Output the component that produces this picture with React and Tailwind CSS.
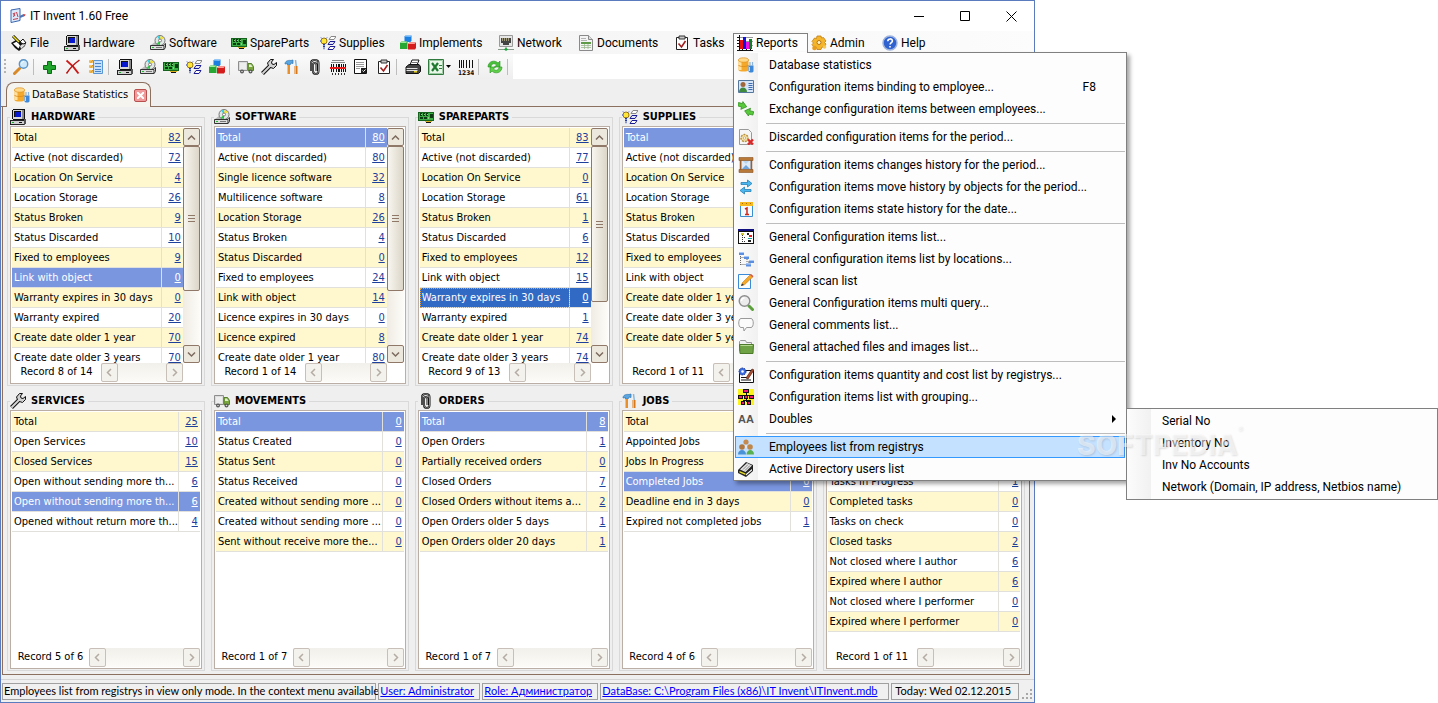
import { Fragment } from "react";
import clsx from "clsx";

// ---------- Icons (all on a 16x16 grid) ----------
const drawings = {
  app: (
    <>
      <path d="M1 2l9-1.500v12L1 14.500z" fill="#dbe9fa" stroke="#3a66b0" />
      <path d="M3 5l2 3M5 4.500L3.500 9M6.500 4l1.500 5M3 11.500l5-1" stroke="#c83c4c" />
      <path d="M10 9l4-2" stroke="#4a76b8" strokeWidth="2" />
      <path d="M13 6.500l2.500-.5-.5 2-2 .5z" fill="#d04848" />
    </>
  ),
  file: (
    <>
      <path d="M0 8l5-3 10 2-1 4-6 5-4-3z" fill="#111" />
      <path d="M2 8.500l4-2 3 4-1.500 3z" fill="#fff" />
      <path d="M9 11l4-3 1 2-4 4z" fill="#ddd" />
      <path d="M2 1l6 6" stroke="#111" strokeWidth="3" />
      <path d="M2 1l6 6" stroke="#f2e21a" strokeWidth="1.500" />
      <path d="M9 7l3-3 3 4-3 1z" fill="#fff" stroke="#111" />
    </>
  ),
  pc: (
    <g shapeRendering="crispEdges">
      <path d="M3 0h11l1 1v9l-1 1H3l-1-1V1z" fill="#111" />
      <path d="M3 1h9v9H3z" fill="#d8d8d8" />
      <path d="M12 1h2v9h-2z" fill="#8a8a8a" />
      <path d="M4 2h7v6H4z" fill="#111" />
      <path d="M5 3h6v5H5z" fill="#0818d0" />
      <path d="M0 11h14v4H0z" fill="#d0d0d0" stroke="#222" />
      <path d="M14 10h2v4l-2 2z" fill="#555" />
      <path d="M9 13h3v1H9z" fill="#111" />
      <path d="M2 13h2v1H2z" fill="#18b028" />
    </g>
  ),
  cd: (
    <>
      <path d="M1 10l4-3h10l-1 3v4H1z" fill="#b9b9b9" />
      <circle cx="10" cy="5.500" r="5" fill="#dfe8e4" stroke="#777" />
      <path d="M10 5.500L7 1.500 10 .8z" fill="#30d0f0" />
      <path d="M10 5.500l.5-4.500 3.500 2z" fill="#f4e02c" />
      <path d="M10 5.500l-3.500 3.500L10 10z" fill="#28c840" />
      <circle cx="10" cy="5.500" r="1.500" fill="#fff" stroke="#666" strokeWidth=".8" />
      <path d="M.5 10.500h13.500v4H.5z" fill="#dcdcdc" stroke="#333" />
      <path d="M2 12.500h2" stroke="#20c030" />
      <path d="M6 12.500h6" stroke="#777" />
      <path d="M14.500 10l1-1.500v4l-1.500 2" stroke="#333" fill="none" />
    </>
  ),
  board: (
    <g shapeRendering="crispEdges">
      <path d="M0 3h16v9H0z" fill="#15631c" />
      <path d="M1 4h14v7H1z" fill="#3cae46" />
      <path d="M2 4h2v3H2zM5 4h2v3H5zM8 4h2v3H8zM12 5h3v4h-3zM2 8h3v2H2zM6 8h3v2H6z" fill="#0c3a12" />
      <path d="M3 5h1v1H3zM6 5h1v1H6zM9 5h1v1H9zM10 8h1v2h-1z" fill="#8fd080" />
      <path d="M7 12h7v1H7z" fill="#d8b020" />
      <path d="M8 13h5v1H8z" fill="#111" />
    </g>
  ),
  supplies: (
    <>
      <circle cx="4" cy="6" r="3" fill="#ffe63a" stroke="#a07808" />
      <path d="M1 2.500l1 1M7 2.500l-1 1M0 6h1" stroke="#2848d8" />
      <path d="M3 9.500h2M3 11.500h2M3.500 13.500h1" stroke="#2038b0" strokeWidth="1.500" />
      <path d="M9 4.500L11 1.500h5l-2 3z" fill="#fff" stroke="#888" />
      <path d="M8 9.500l2-3h5l-2 3z" fill="#dfe4ff" stroke="#1c1c90" />
      <path d="M8 14.500l2-3h5l-2 3z" fill="#fff" stroke="#1c1c90" />
    </>
  ),
  blocks: (
    <>
      <path d="M4.500 1.500l1-1h6v5l-1 1.500h-6z" fill="#1a7fe0" />
      <path d="M4.500 1.500l1-1h6l-1 1.200z" fill="#9fd2ff" />
      <path d="M0 8l1.500-1.500H7.500V14H0z" fill="#27a834" />
      <path d="M0 8l1.500-1.500h6L6 8z" fill="#a0ec9c" />
      <path d="M8 9l1.500-1.500H16V13l-1 1.500H8z" fill="#d41c1c" />
      <path d="M8 9l1.500-1.500H16L14.500 9z" fill="#ff9c94" />
    </>
  ),
  network: (
    <>
      <path d="M1.500.5h13v11h-13z" fill="#e6e6e6" stroke="#9a9a9a" />
      <path d="M3 3h10v5h-2v2H5V8H3z" fill="#444" />
      <path d="M4.500 3v3M6.500 3v3M8.500 3v3M10.500 3v3" stroke="#b8b090" strokeWidth=".8" />
      <path d="M0 14.500h16M8 12v3" stroke="#8a9a8c" />
      <path d="M6 14.500l2-2 2 2-2 1.500z" fill="#18a838" />
    </>
  ),
  docs: (
    <>
      <path d="M1.500.5h9l4 4v11h-13z" fill="#f4f4f4" stroke="#8a8a8a" />
      <path d="M10.500.5v4h4" fill="#ddd" stroke="#8a8a8a" />
      <path d="M3 5.500h6M3 3.500h5" stroke="#b4b4b4" />
      <path d="M3 7h10v2H3z" fill="#5f9a48" />
      <path d="M3 10.500h10M3 12.500h10M6.500 9v5M10 9v5" stroke="#9cb890" strokeWidth=".8" />
    </>
  ),
  tasks: (
    <>
      <path d="M2.500 2.500h11v12h-11z" fill="#fff" stroke="#222" />
      <path d="M5 1h6v3H5z" fill="#c8c8c8" stroke="#333" />
      <path d="M4.500 8.500l3 3.500 4-6" fill="none" stroke="#a02020" strokeWidth="1.600" />
    </>
  ),
  chart: (
    <g shapeRendering="crispEdges">
      <path d="M2 2h14M2 6h14M2 10h14" stroke="#999" />
      <path d="M2 0v15M0 15h16M0 2h2M0 5h2M0 8h2M0 11h2M5 14v2M9 14v2M13 14v2" stroke="#111" />
      <path d="M3 5h3v9H3z" fill="#e81010" />
      <path d="M6 2h3v12H6z" fill="#1010e0" />
      <path d="M9 7h3v7H9z" fill="#f010e0" />
      <path d="M12 4h3v10h-3z" fill="#108028" />
    </g>
  ),
  gear: (
    <>
      <path
        d="M6 1h4l.5 2 2-.5L15 6l-1.500 1.500L15 9l-2 3.500-2-.5-1 2.500H6L5.500 12.500l-2 .5L1 9.500 2.500 8 1 6.500 3.500 3l2 .5z"
        fill="#f4b52a"
        stroke="#c07c10"
        strokeWidth=".8"
      />
      <circle cx="8" cy="7.500" r="2" fill="#fff3c8" stroke="#b87410" />
      <circle cx="3.500" cy="13" r="2.300" fill="#e89c1c" />
      <circle cx="13.500" cy="12" r="1.800" fill="#f6c850" />
    </>
  ),
  help: (
    <>
      <circle cx="8" cy="8" r="7" fill="#2f62d0" stroke="#9fb4dc" strokeWidth="1.500" />
      <path d="M5.800 6.200c0-3 4.600-3 4.600-.2 0 1.700-2.300 1.800-2.300 3.600M8 11v1.600" fill="none" stroke="#fff" strokeWidth="1.600" />
    </>
  ),
  search: (
    <>
      <path d="M1.500 14.500l5-5" stroke="#d88a28" strokeWidth="3" strokeLinecap="round" />
      <circle cx="10.500" cy="5" r="4.200" fill="#cfe9fb" stroke="#5b94c8" strokeWidth="1.400" />
      <path d="M8.500 4.500c.3-1.500 1.500-2 2.500-2" stroke="#fff" fill="none" />
    </>
  ),
  plus: (
    <path d="M5.500 2.500h4v4h4v4h-4v4h-4v-4h-4v-4h4z" fill="#22a52c" stroke="#0b6b14" />
  ),
  cross: (
    <>
      <path d="M1.500 1.500C6 5 10 9 13.500 14.500" stroke="#d01818" strokeWidth="1.800" fill="none" />
      <path d="M14.500 1C9 5 5 9 1.500 14.500" stroke="#b81414" strokeWidth="1.500" fill="none" />
    </>
  ),
  checklist: (
    <>
      <path d="M5.500 1.500h9v13h-9z" fill="#c4e0fa" stroke="#5a96d4" />
      <path d="M7 4.500h6M7 7.500h6M7 10.500h6M7 12.500h6" stroke="#4a86c8" />
      <path d="M1 1h4v3H1zM1 6h4v3H1zM1 11h4v3H1z" fill="#f8c860" />
      <path d="M2 2.500l1 1 2-2.500M2 7.500l1 1 2-2.500M2 12.500l1 1 2-2.500" stroke="#d88c20" fill="none" />
    </>
  ),
  truck: (
    <>
      <path d="M.5 2.500h9v9h-9z" fill="#dcdcdc" stroke="#8e8e8e" />
      <path d="M2 5h6M2 7h6M2 9h6" stroke="#fff" />
      <path d="M10 4.500h3.500l2 3v4H10z" fill="#7aa83e" stroke="#56802a" />
      <path d="M11 5.500h2l1.500 2.500H11z" fill="#dfeecb" />
      <circle cx="4" cy="12.500" r="2" fill="#555" />
      <circle cx="12.500" cy="12.500" r="2" fill="#555" />
      <circle cx="4" cy="12.500" r=".8" fill="#ddd" />
      <circle cx="12.500" cy="12.500" r=".8" fill="#ddd" />
    </>
  ),
  wrench: (
    <>
      <path d="M1.500 14.500l7-7" stroke="#111" strokeWidth="4" />
      <path d="M8 8l-1.500-4L9.500.5h3L10.500 3l.5 2 2 .5L15.500 3.500v3l-3 3z" fill="#d0d0d0" stroke="#111" strokeLinejoin="round" />
      <path d="M1.500 14.500L9.500 6.500" stroke="#d4d4d4" strokeWidth="2" />
    </>
  ),
  hammer: (
    <>
      <path d="M1 5c0-3 3-4 6-3.500L9 1v3.500L7 4 6 6H3.500V4.500z" fill="#5aa6e0" stroke="#2d74b4" strokeWidth=".7" />
      <path d="M3.500 6H6v9H3.500z" fill="#e8912c" />
      <path d="M11.500 1l.8 6" stroke="#8ab8dc" strokeWidth="1.500" />
      <path d="M10.500 7h3v8h-3z" fill="#d87818" />
      <path d="M11.500 7v8" stroke="#ffc878" strokeWidth=".8" />
    </>
  ),
  clip: (
    <>
      <path d="M4 12V4c0-4 7.500-4 7.500 0v8c0 4-5.500 4-5.500 0V5.500c0-2 3.500-2 3.500 0V12" fill="none" stroke="#111" strokeWidth="2" />
      <path d="M4 12V4c0-4 7.500-4 7.500 0v8c0 4-5.500 4-5.500 0V5.500c0-2 3.500-2 3.500 0V12" fill="none" stroke="#ddd" strokeWidth=".6" />
    </>
  ),
  scan: (
    <g shapeRendering="crispEdges">
      <path d="M2 1h12M1 3h14" stroke="#888" />
      <path d="M1 5v8M3 5v8M6 5v8M8 5v8M9 5v8M11 5v8M13 5v8M15 5v8" stroke="#111" />
      <path d="M0 8h16v2H0z" fill="#e81818" />
      <path d="M2 14v2M5 14v2M8 14v2M11 14v2M14 14v2" stroke="#333" />
    </g>
  ),
  page: (
    <>
      <path d="M1.500.5h12v14h-12z" fill="#fff" stroke="#111" />
      <path d="M3 3.500h8M3 5.500h8M3 7.500h8M3 9.500h4" stroke="#999" />
      <path d="M8 9h5v5H8z" fill="#222" />
      <path d="M9.500 11.500l1 1 2-2" stroke="#fff" fill="none" />
    </>
  ),
  printer: (
    <>
      <path d="M5 6l2-5h7l-2 5z" fill="#fff" stroke="#111" />
      <path d="M7 3.500h5" stroke="#777" />
      <path d="M1 8l3-2.500h10l1.500 2v5l-2 2H1z" fill="#444" stroke="#111" />
      <path d="M1.500 9.500h11M1.500 11.500h11" stroke="#e0e0e0" />
      <path d="M9 12h3v1.500H9z" fill="#e6d020" />
    </>
  ),
  excel: (
    <>
      <path d="M.5.5h15v15H.5z" fill="#eaf6ea" stroke="#2f7a3c" />
      <path d="M1.500 1.500h13v13h-13z" fill="none" stroke="#9ccaa2" />
      <path d="M4 4l6 8M10 4l-6 8" stroke="#1f7a30" strokeWidth="2.200" />
      <path d="M11 6.500h3M11 9.500h3" stroke="#2f7a3c" />
    </>
  ),
  barcode: (
    <>
      <path d="M1.500 1v8M3.500 1v8M5.500 1v8M8.500 1v8M11.500 1v8M14.500 1v8" stroke="#111" shapeRendering="crispEdges" />
      <text x="0" y="15.500" fontSize="6.500" fontFamily="DejaVu Sans Condensed" fontWeight="700" fill="#111">
        1234
      </text>
    </>
  ),
  refresh: (
    <>
      <path d="M1 8C1 2 8 .5 11 4l2-2v6H7.500l2-2C7 3.500 4 5 4 8z" fill="#48c03a" stroke="#2a9224" strokeWidth=".6" />
      <path d="M15 8c0 6-7 7.500-10 4l-2 2V8h5.500l-2 2C9 12.500 12 11 12 8z" fill="#5fd048" stroke="#2a9224" strokeWidth=".6" />
    </>
  ),
  database: (
    <>
      <path d="M.5 3v10c0 2 10 2 10 0V3z" fill="#f5a92c" />
      <path d="M2 4v9" stroke="#ffe2a0" strokeWidth="3" />
      <ellipse cx="5.500" cy="3" rx="5" ry="2.200" fill="#ffd98a" stroke="#dd8f1c" strokeWidth=".7" />
      <path d="M.5 8c0 2 10 2 10 0" fill="none" stroke="#d98818" strokeWidth=".8" />
      <path d="M10.500 8.500h5V14c0 2-5 2-5 0z" fill="#3d88d8" />
      <path d="M12 5v4M14.500 5v4" stroke="#8ab4dc" strokeWidth="1.200" />
      <path d="M11.500 10v4" stroke="#b8dcff" />
    </>
  ),
  card: (
    <>
      <path d="M.5 1.500h15v12H.5z" fill="#d6e6f8" stroke="#56779c" />
      <circle cx="5" cy="5.500" r="2.500" fill="#a0683a" />
      <path d="M1 13c0-6 8-6 8 0z" fill="#3f8a3c" />
      <path d="M10.500 4.500h4M10.500 6.500h4M10.500 8.500h4M10.500 10.500h4" stroke="#3c6cb0" />
    </>
  ),
  swap: (
    <>
      <path d="M0 2.500h4V.5l5 4-5 4V6H0z" fill="#58c83c" stroke="#2f8c20" strokeWidth=".7" transform="rotate(15 4 4)" />
      <path d="M15.500 13h-4v2l-5-4 5-4v2.500h4z" fill="#58c83c" stroke="#2f8c20" strokeWidth=".7" transform="rotate(15 11 11)" />
    </>
  ),
  discard: (
    <>
      <path d="M1.500.5h9l3 3v12h-12z" fill="#f6f6f6" stroke="#999" />
      <circle cx="6.500" cy="9" r="3.500" fill="#f4dfa4" stroke="#b8913c" strokeDasharray="2 1" strokeWidth="1.500" />
      <circle cx="6.500" cy="9" r="1.200" fill="#fff" stroke="#b8913c" strokeWidth=".6" />
      <path d="M10 10.500l5 5M15 10.500l-5 5" stroke="#d82828" strokeWidth="2.400" />
    </>
  ),
  hourglass: (
    <>
      <path d="M3 3h10v10H3z" fill="#dfeaf6" stroke="#8ca0b8" />
      <path d="M4 12l4-4 4 4z" fill="#6fa4dc" />
      <path d="M5 4h6L8 7z" fill="#b8d4f0" />
      <path d="M2.500 3v10M13.500 3v10" stroke="#9a5f2c" strokeWidth="1.500" />
      <path d="M1 .5h14v3H1zM1 12.500h14v3H1z" fill="#b87838" stroke="#8a5320" strokeWidth=".6" />
    </>
  ),
  arrows: (
    <>
      <path d="M3 3.500h6.500V1L14 4.500 9.500 8V5.500H3z" fill="#4db8f0" stroke="#2480b8" strokeWidth=".8" />
      <path d="M13 10.500H6.500V8L2 11.500 6.500 15v-2.500H13z" fill="#4db8f0" stroke="#2480b8" strokeWidth=".8" />
    </>
  ),
  calendar: (
    <>
      <path d="M2.500 1.500h12v14h-12z" fill="#f4faff" stroke="#3c8cd0" />
      <path d="M2 1h13v4H2z" fill="#f6b81c" />
      <path d="M4.500 2v1M8.500 2v1M12.500 2v1" stroke="#a86c08" />
      <path d="M7 8l2-1v6M7 13.500h4" stroke="#d02818" strokeWidth="1.500" fill="none" />
    </>
  ),
  tree: (
    <g shapeRendering="crispEdges">
      <path d="M0 0h16v15H0z" fill="#111" />
      <path d="M1 3h14v11H1z" fill="#fff" />
      <path d="M0 0h16v2H0z" fill="#101080" />
      <path d="M3 4h3v2H3z" fill="#d8c81c" />
      <path d="M4 6v7M4 8h3M4 12h3" stroke="#333" strokeDasharray="1 1" />
      <path d="M9 4h2v2H9z" fill="#222" />
      <path d="M11 6h3v2h-3z" fill="#e02020" />
      <path d="M10 9h4v1h-4z" fill="#18a0a0" />
      <path d="M10 11h3v2h-3z" fill="#222" />
    </g>
  ),
  nodes: (
    <>
      <path d="M2.500 3v11M2.500 6.500H7M2.500 13.500H10M9 8v3h2" stroke="#666" strokeDasharray="1 1" fill="none" />
      <path d="M1 1h5v3H1zM6 5h5v3H6zM11 9h5v3h-5zM8 12.500h5v3H8z" fill="#5a8ee0" />
      <path d="M1 1.500h5M6 5.500h5M11 9.500h5M8 13h5" stroke="#a8c8f8" />
    </>
  ),
  edit: (
    <>
      <path d="M.5 1.500h12v14H.5z" fill="#fafdff" stroke="#3b8ad8" />
      <path d="M3.500 12.500l1-3 8-8 2.500 2.200-8.500 8z" fill="#f4a828" stroke="#c87a14" strokeWidth=".6" />
      <path d="M3 13l1-2.500 2 1.500z" fill="#333" />
      <path d="M12 2l2.500 2.200 1-1L13 1z" fill="#d85050" />
    </>
  ),
  query: (
    <>
      <path d="M11 11l3.500 3.500" stroke="#5ca03c" strokeWidth="3" strokeLinecap="round" />
      <circle cx="6.500" cy="6" r="5.300" fill="#ececec" stroke="#8e8e8e" strokeWidth="1.400" />
      <path d="M3.500 6c0-2 1.500-3 3-3" fill="none" stroke="#fff" strokeWidth="1.400" />
    </>
  ),
  comment: (
    <path
      d="M3 1.500h10c3 0 3 9 0 9H8.500L6 14l-.5-3.500H3c-3 0-3-9 0-9z"
      fill="#fbfbfb"
      stroke="#9a9a9a"
    />
  ),
  folder: (
    <>
      <path d="M1.500 12V2.500l1-1h5l1 2h5V12z" fill="#f0f0f0" stroke="#9a9a9a" />
      <path d="M1.500 5.500h14l-.5 9H2z" fill="#6ea244" stroke="#4c7a2a" />
      <path d="M2.500 6.500h12" stroke="#b4d890" />
    </>
  ),
  cost: (
    <>
      <path d="M1.500 3.500h14v12h-14z" fill="#fff" stroke="#111" />
      <path d="M3 10.500h6M3 13h10" stroke="#111" />
      <circle cx="4.500" cy="4.500" r="3.500" fill="#3a6ce0" stroke="#14308c" strokeDasharray="1.500 1" />
      <circle cx="4.500" cy="4.500" r="1.300" fill="#fff" />
      <path d="M8 11l6-9 2 1-6 9z" fill="#b05030" stroke="#501c10" strokeWidth=".7" />
    </>
  ),
  grouping: (
    <g shapeRendering="crispEdges">
      <path d="M0 0h16v16H0z" fill="#fbf31c" />
      <path d="M8 3v10M3 8V6h10v2M5 13v-2h7v2" stroke="#111" fill="none" />
      <path d="M5 0h6v4H5zM0 6h5v4H0zM6 6h4v4H6zM11 6h5v4h-5zM3 12h4v4H3zM9 12h4v4H9z" fill="#111" />
      <path d="M6 1h4v2H6zM1 7h3v2H1zM7 7h2v2H7zM12 7h3v2h-3zM4 13h2v2H4zM10 13h2v2h-2z" fill="#f01878" />
    </g>
  ),
  doubles: (
    <text x="0" y="12" fontSize="11" fontWeight="700" fontFamily="Liberation Sans" fill="#555">
      AA
    </text>
  ),
  people: (
    <>
      <circle cx="8" cy="3" r="2.600" fill="#c48a50" />
      <path d="M4.500 9c0-4 7-4 7 0z" fill="#e0e8f4" />
      <circle cx="4" cy="8" r="2.800" fill="#b07840" />
      <path d="M0 15.500c0-6 8-6 8 0z" fill="#4a92d8" />
      <circle cx="12" cy="8" r="2.800" fill="#c08848" />
      <path d="M8.500 15.500c0-6 7.500-6 7.500 0z" fill="#58b050" />
    </>
  ),
  directory: (
    <>
      <path d="M0 9l8-8 7 3v6l-7 6-8-4z" fill="#222" />
      <path d="M2 8.500l7-6.500 5 2.500L7.500 11z" fill="#e4e4e4" />
      <path d="M5 8.500l5-5M7 9.500l5-5" stroke="#888" />
      <path d="M8 13l6-5v1.500l-6 5z" fill="#fff" />
      <path d="M1.500 10l6 2.500v1.500l-6-2.500z" fill="#e6dc28" />
    </>
  ),
};

function Icon({ name, className }) {
  return (
    <svg viewBox="0 0 16 16" className={clsx("size-4 shrink-0", className)} fill="none" aria-hidden="true">
      {drawings[name]}
    </svg>
  );
}

// ---------- Data ----------
const menus = [
  { label: "File", icon: "file", width: "w-[53px]" },
  { label: "Hardware", icon: "pc", width: "w-[86px]" },
  { label: "Software", icon: "cd", width: "w-[81px]" },
  { label: "SpareParts", icon: "board", width: "w-[89px]" },
  { label: "Supplies", icon: "supplies", width: "w-20" },
  { label: "Implements", icon: "blocks", width: "w-[98px]" },
  { label: "Network", icon: "network", width: "w-20" },
  { label: "Documents", icon: "docs", width: "w-24" },
  { label: "Tasks", icon: "tasks", width: "w-[62px]" },
  { label: "Reports", icon: "chart", width: "w-[75px]", open: true },
  { label: "Admin", icon: "gear", width: "w-[71px]" },
  { label: "Help", icon: "help", width: "w-[60px]" },
];

const toolbar = [
  ["search"],
  ["plus", "cross", "checklist"],
  ["pc", "cd", "board", "supplies", "blocks"],
  ["truck", "wrench", "hammer", "clip", "scan", "page", "tasks"],
  ["printer", "excel", "barcode"],
  ["refresh"],
];

const reports = [
  [
    { label: "Database statistics", icon: "database" },
    { label: "Configuration items binding to employee...", icon: "card", hotkey: "F8" },
    { label: "Exchange configuration items between employees...", icon: "swap" },
  ],
  [{ label: "Discarded configuration items for the period...", icon: "discard" }],
  [
    { label: "Configuration items changes history for the period...", icon: "hourglass" },
    { label: "Configuration items move history by objects for the period...", icon: "arrows" },
    { label: "Configuration items state history for the date...", icon: "calendar" },
  ],
  [
    { label: "General Configuration items list...", icon: "tree" },
    { label: "General configuration items list by locations...", icon: "nodes" },
    { label: "General scan list", icon: "edit" },
    { label: "General Configuration items multi query...", icon: "query" },
    { label: "General comments list...", icon: "comment" },
    { label: "General attached files and images list...", icon: "folder" },
  ],
  [
    { label: "Configuration items quantity and cost list by registrys...", icon: "cost" },
    { label: "Configuration items list with grouping...", icon: "grouping" },
    {
      label: "Doubles",
      icon: "doubles",
      children: ["Serial No", "Inventory No", "Inv No Accounts", "Network (Domain, IP address, Netbios name)"],
    },
  ],
  [
    { label: "Employees list from registrys", icon: "people", hover: true },
    { label: "Active Directory users list", icon: "directory" },
  ],
];

const topGroups = [
  {
    title: "HARDWARE",
    icon: "pc",
    record: "Record 8 of 14",
    selected: 7,
    thumb: "h-[145px]",
    rows: [
      ["Total", 82],
      ["Active (not discarded)", 72],
      ["Location On Service", 4],
      ["Location Storage", 26],
      ["Status Broken", 9],
      ["Status Discarded", 10],
      ["Fixed to employees", 9],
      ["Link with object", 0],
      ["Warranty expires in 30 days", 0],
      ["Warranty expired", 20],
      ["Create date older 1 year", 70],
      ["Create date older 3 years", 70],
    ],
  },
  {
    title: "SOFTWARE",
    icon: "cd",
    record: "Record 1 of 14",
    selected: 0,
    thumb: "h-[145px]",
    rows: [
      ["Total", 80],
      ["Active (not discarded)", 80],
      ["Single licence software", 32],
      ["Multilicence software", 8],
      ["Location Storage", 26],
      ["Status Broken", 4],
      ["Status Discarded", 0],
      ["Fixed to employees", 24],
      ["Link with object", 14],
      ["Licence expires in 30 days", 0],
      ["Licence expired", 8],
      ["Create date older 1 year", 80],
    ],
  },
  {
    title: "SPAREPARTS",
    icon: "board",
    record: "Record 9 of 13",
    selected: 8,
    focused: true,
    thumb: "h-[156px]",
    rows: [
      ["Total", 83],
      ["Active (not discarded)", 77],
      ["Location On Service", 0],
      ["Location Storage", 61],
      ["Status Broken", 1],
      ["Status Discarded", 6],
      ["Fixed to employees", 12],
      ["Link with object", 15],
      ["Warranty expires in 30 days", 0],
      ["Warranty expired", 1],
      ["Create date older 1 year", 74],
      ["Create date older 3 years", 74],
    ],
  },
  {
    title: "SUPPLIES",
    icon: "supplies",
    record: "Record 1 of 11",
    selected: 0,
    rows: [
      ["Total"],
      ["Active (not discarded)"],
      ["Location On Service"],
      ["Location Storage"],
      ["Status Broken"],
      ["Status Discarded"],
      ["Fixed to employees"],
      ["Link with object"],
      ["Create date older 1 year"],
      ["Create date older 3 years"],
      ["Create date older 5 years"],
    ],
  },
  { icon: "blocks", rows: [] },
];

const bottomGroups = [
  {
    title: "SERVICES",
    icon: "wrench",
    record: "Record 5 of 6",
    selected: 4,
    rows: [
      ["Total", 25],
      ["Open Services", 10],
      ["Closed Services", 15],
      ["Open without sending more th...", 6],
      ["Open without sending more th...", 6],
      ["Opened without return more th...", 4],
    ],
  },
  {
    title: "MOVEMENTS",
    icon: "truck",
    record: "Record 1 of 7",
    selected: 0,
    rows: [
      ["Total", 0],
      ["Status Created", 0],
      ["Status Sent", 0],
      ["Status Received", 0],
      ["Created without sending more ...", 0],
      ["Created without sending more ...", 0],
      ["Sent without receive more the...", 0],
    ],
  },
  {
    title: "ORDERS",
    icon: "clip",
    record: "Record 1 of 7",
    selected: 0,
    rows: [
      ["Total", 8],
      ["Open Orders", 1],
      ["Partially received orders", 0],
      ["Closed Orders", 7],
      ["Closed Orders without items a...", 2],
      ["Open Orders older 5 days", 1],
      ["Open Orders older 20 days", 1],
    ],
  },
  {
    title: "JOBS",
    icon: "hammer",
    record: "Record 4 of 6",
    selected: 3,
    rows: [
      ["Total"],
      ["Appointed Jobs"],
      ["Jobs In Progress"],
      ["Completed Jobs", 0],
      ["Deadline end in 3 days", 0],
      ["Expired not completed jobs", 1],
    ],
  },
  {
    icon: "tasks",
    record: "Record 1 of 11",
    selected: 0,
    rows: [
      [""],
      [""],
      [""],
      ["Tasks In Progress", 1],
      ["Completed tasks", 0],
      ["Tasks on check", 0],
      ["Closed tasks", 2],
      ["Not closed where I author", 6],
      ["Expired where I author", 6],
      ["Not closed where I performer", 0],
      ["Expired where I performer", 0],
    ],
  },
];

// ---------- Chrome ----------
function TitleBar() {
  return (
    <header className="flex h-[30px] items-center bg-white pl-[9px] text-xs">
      <Icon name="app" />
      <h1 className="ml-1 flex-1">IT Invent 1.60 Free</h1>
      <button aria-label="Minimize" className="flex h-full w-[46px] items-center justify-center">
        <svg className="size-[11px]" viewBox="0 0 11 11" stroke="#000">
          <path d="M0 5.500h10" />
        </svg>
      </button>
      <button aria-label="Maximize" className="flex h-full w-[46px] items-center justify-center">
        <svg className="size-[11px]" viewBox="0 0 11 11" stroke="#000" fill="none">
          <path d="M.5.5h9v9h-9z" />
        </svg>
      </button>
      <button aria-label="Close" className="flex h-full w-[46px] items-center justify-center">
        <svg className="size-[11px]" viewBox="0 0 11 11" stroke="#000">
          <path d="M.5.5l10 10M10.500.5l-10 10" />
        </svg>
      </button>
    </header>
  );
}

function SubMenu({ items }) {
  return (
    <ul className="absolute left-full top-0 ml-px w-[312px] border border-[#808080] bg-[linear-gradient(to_right,#fcfcfc,#f1f1f1_24px,#fdfdfd_24px)] py-px">
      {items.map((label) => (
        <li key={label}>
          <button className="flex h-[22px] w-full items-center pl-[35px]">{label}</button>
        </li>
      ))}
    </ul>
  );
}

function ReportsMenu() {
  return (
    <ul className="absolute -left-px top-full z-10 w-[394px] border border-[#808080] bg-[linear-gradient(to_right,#fcfcfc,#f1f1f1_24px,#fdfdfd_24px)] px-px pt-px shadow-[3px_3px_4px_rgba(0,0,0,0.35)]">
      {reports.map((section, i) => (
        <Fragment key={i}>
          {i > 0 && (
            <li role="separator" className="ml-[31px] h-[6px] pt-[3px]">
              <hr className="border-[#bdbdbd]" />
            </li>
          )}
          {section.map((item) => (
            <li key={item.label} className={clsx(item.children && "relative")}>
              <button
                className={clsx(
                  "flex h-[22px] w-full items-center border pl-0.5 text-left",
                  item.hover ? "border-[#3399ff] bg-[#c4e1ff]" : "border-transparent"
                )}
              >
                <Icon name={item.icon} />
                <span className="ml-[15px] flex-1">{item.label}</span>
                {item.hotkey && <span className="mr-7">{item.hotkey}</span>}
                {item.children && (
                  <svg className="mr-2 h-2 w-1" viewBox="0 0 4 8">
                    <path d="M0 0l4 4-4 4z" />
                  </svg>
                )}
              </button>
              {item.children && <SubMenu items={item.children} />}
            </li>
          ))}
        </Fragment>
      ))}
    </ul>
  );
}

function MenuBar() {
  return (
    <nav className="flex h-[23px] bg-linear-to-r from-[#eeeeee] to-[#fcfcfc] pl-[7px] pt-[2px] text-xs">
      {menus.map((m) => (
        <div
          key={m.label}
          className={clsx(
            "relative h-[19px]",
            m.width,
            m.open && "border border-b-0 border-[#808080] bg-[#fdfdfd]"
          )}
        >
          <button className="flex h-full items-center gap-[3px] pl-[3px]">
            <Icon name={m.icon} />
            {m.label}
          </button>
          {m.open && <ReportsMenu />}
          {m.open && <span className="absolute inset-x-0 top-full z-20 h-px bg-[#fdfdfd]" />}
        </div>
      ))}
    </nav>
  );
}

function ToolBar() {
  return (
    <div role="toolbar" className="flex h-[25px] bg-white">
      <div className="flex items-center bg-linear-to-b from-[#fbfbfb] to-[#eeeeee] pl-[3px]">
        <svg className="mr-1 h-4 w-[2px]" viewBox="0 0 2 16" fill="#b4b4b4">
          <path d="M0 0h2v2H0zM0 4h2v2H0zM0 8h2v2H0zM0 12h2v2H0z" />
        </svg>
        {toolbar.map((group, i) => (
          <Fragment key={i}>
            {group.map((name) => (
              <button key={name} aria-label={name} className="flex h-[22px] items-center pl-[3px] pr-1">
                <Icon name={name} />
                {name === "excel" && (
                  <svg className="ml-0.5 h-[3px] w-[5px]" viewBox="0 0 5 3">
                    <path d="M0 0h5L2.500 3z" />
                  </svg>
                )}
              </button>
            ))}
            <span className="mr-[5px] h-4 w-px bg-[#bdbdbd]" />
          </Fragment>
        ))}
      </div>
    </div>
  );
}

function TabBar() {
  return (
    <div className="flex h-7 items-end border-b border-[#8b6f5f] bg-[#efefef] pl-[5px]">
      <div className="-mb-px flex h-[25px] w-[145px] items-center rounded-t-lg border border-b-0 border-[#8b6f5f] bg-[#f5f4ef] pl-[7px] pr-[3px] font-['DejaVu_Sans_Condensed',Tahoma,sans-serif] text-[11px]">
        <Icon name="database" />
        <span className="ml-0.5 flex-1 whitespace-nowrap">DataBase Statistics</span>
        <button
          aria-label="Close tab"
          className="flex size-[13px] items-center justify-center rounded-[2px] border border-[#b85050] bg-[#f09c9c]"
        >
          <svg className="size-[7px]" viewBox="0 0 7 7" stroke="#fff" strokeWidth="2">
            <path d="M0 0l7 7M7 0L0 7" />
          </svg>
        </button>
      </div>
    </div>
  );
}

// ---------- Statistic groups ----------
function Chevron({ d, disabled }) {
  return (
    <svg className="size-[9px]" viewBox="0 0 9 9" fill="none" stroke={disabled ? "#b4aca4" : "#7d6a5e"} strokeWidth="1.500">
      <path d={d} />
    </svg>
  );
}

function ScrollBar({ thumb }) {
  const btn = "flex h-[18px] shrink-0 items-center justify-center rounded-[2px] border border-[#8f7868] bg-[#ece8dd]";
  return (
    <div className="flex w-[17px] shrink-0 flex-col bg-linear-to-r from-[#f0ece4] to-[#fdfcf8]">
      <button aria-label="Scroll up" className={btn}>
        <Chevron d="M1 6.500L4.500 3 8 6.500" />
      </button>
      <div
        className={clsx(
          "flex flex-col items-center justify-center gap-[2px] rounded-[2px] border border-[#8f7868] bg-linear-to-r from-[#f8f6f0] to-[#dcd6c8]",
          thumb
        )}
      >
        <span className="h-px w-[7px] bg-[#8f7868]" />
        <span className="h-px w-[7px] bg-[#8f7868]" />
        <span className="h-px w-[7px] bg-[#8f7868]" />
      </div>
      <span className="flex-1" />
      <button aria-label="Scroll down" className={btn}>
        <Chevron d="M1 2.500L4.500 6 8 2.500" />
      </button>
    </div>
  );
}

function Navigator({ record, inset }) {
  const btn = "flex h-[19px] w-[17px] items-center justify-center rounded-[2px] border border-[#c8c0b8] bg-[#f4f2ec]";
  return (
    <div className={clsx("flex h-[19px] shrink-0 items-center", inset && "pr-[17px]")}>
      <span className={clsx("whitespace-nowrap text-center", record.length > 13 ? "w-[89px]" : "w-[77px]")}>
        {record}
      </span>
      <div className="flex flex-1 justify-between bg-linear-to-b from-[#f2f0ea] to-[#fcfbf8]">
        <button aria-label="Previous" className={btn}>
          <Chevron d="M6 1L2.500 4.500 6 8" disabled />
        </button>
        <button aria-label="Next" className={btn}>
          <Chevron d="M3 1l3.500 3.500L3 8" disabled />
        </button>
      </div>
    </div>
  );
}

function rowColor(i, selected, focused) {
  if (i === selected) return focused ? "bg-[#316ac5] text-white" : "bg-[#7a96df] text-white";
  return i % 2 === 0 ? "bg-[#fff8cf]" : "bg-white";
}

function StatGroup({ group, clip }) {
  const { title, icon, rows, selected, focused, thumb, record } = group;
  return (
    <fieldset className="flex min-w-0 flex-col border border-[#d9d9d9] px-[2px] pb-px pt-px">
      <legend className="flex h-4 items-center gap-[5px] pr-[3px] text-[11px] font-bold">
        <Icon name={icon} />
        {title}
      </legend>
      <div className="flex h-full flex-col border border-[#bbaea4] bg-white p-px text-[11px]">
        <div className={clsx("flex overflow-hidden", clip ? "h-[235px]" : "flex-1")}>
          <div className="min-w-0 flex-1">
            <table className="w-full table-fixed border-separate border-spacing-0" aria-label={title}>
              <tbody>
                {rows.map(([label, value], i) => (
                  <tr key={i} className={rowColor(i, selected, focused)}>
                    <td
                      className={clsx(
                        "h-5 overflow-hidden whitespace-nowrap border-b border-r border-[#e2e0da] pl-[2px] leading-[19px]",
                        focused && i === selected && "outline-1 -outline-offset-1 outline-dotted outline-[#e0a040]"
                      )}
                    >
                      {label}
                    </td>
                    <td className="h-5 w-[21px] border-b border-[#e2e0da] pr-[2px] text-right leading-[19px]">
                      <a href="#" className={clsx("underline", i === selected ? "text-white" : "text-[#1c409c]")}>
                        {value}
                      </a>
                    </td>
                  </tr>
                ))}
              </tbody>
            </table>
          </div>
          {thumb && <ScrollBar thumb={thumb} />}
        </div>
        {record && <Navigator record={record} inset={Boolean(thumb)} />}
      </div>
    </fieldset>
  );
}

function StatusBar() {
  const cell = "flex h-[17px] items-center whitespace-nowrap border border-[#a0a0a0] px-px";
  return (
    <footer className="flex h-[23px] items-center gap-[2px] border-t border-[#d5d5d5] bg-[#f0f0f0] px-px pt-px font-[Lato,'Liberation_Sans',sans-serif] text-[11px]">
      <span className={clsx(cell, "min-w-0 flex-1")}>
        Employees list from registrys in view only mode. In the context menu available
      </span>
      <span className={clsx(cell, "w-[102px]")}>
        <a href="#" className="text-[#0000ff] underline">User: Administrator</a>
      </span>
      <span className={clsx(cell, "w-[116px]")}>
        <a href="#" className="text-[#0000ff] underline">Role: Администратор</a>
      </span>
      <span className={clsx(cell, "w-[289px]")}>
        <a href="#" className="text-[#0000ff] underline">DataBase: C:\Program Files (x86)\IT Invent\ITInvent.mdb</a>
      </span>
      <span className={clsx(cell, "w-32 pl-[3px]")}>Today: Wed 02.12.2015</span>
      <svg className="mt-1 size-3" viewBox="0 0 12 12" fill="#a8a8a8">
        <path d="M9 1h2v2H9zM5 5h2v2H5zM9 5h2v2H9zM1 9h2v2H1zM5 9h2v2H5zM9 9h2v2H9z" />
      </svg>
    </footer>
  );
}

export default function App() {
  return (
    <div className="relative min-h-screen bg-white font-[Roboto,'Liberation_Sans',sans-serif] text-black">
      <main className="flex min-h-screen w-[72%] flex-col border border-[#5a7bbd] bg-[#efefef]">
        <TitleBar />
        <MenuBar />
        <ToolBar />
        <TabBar />
        <section className="mb-1 ml-px mr-1 flex flex-1 flex-col gap-[7px] border-x border-b border-[#8b6f5f] px-1 pb-[3px] pt-[2px] font-['DejaVu_Sans_Condensed',Tahoma,sans-serif]">
          <div className="grid grid-cols-[1fr_1fr_1fr_1fr_1.025fr] gap-[6px]">
            {topGroups.map((g) => (
              <StatGroup key={g.icon} group={g} clip />
            ))}
          </div>
          <div className="grid flex-1 grid-cols-[1fr_1fr_1fr_1fr_1.025fr] gap-[6px]">
            {bottomGroups.map((g) => (
              <StatGroup key={g.icon} group={g} />
            ))}
          </div>
        </section>
        <StatusBar />
      </main>
      <div
        aria-hidden="true"
        className="pointer-events-none absolute left-[1077px] top-[425px] z-30 flex items-start font-[Inter,sans-serif] text-[28px] font-extrabold leading-10 text-white/50 [text-shadow:1px_1px_2px_rgba(0,0,0,0.12)]"
      >
        SOFTPEDIA<sup className="text-[8px] leading-4">®</sup>
      </div>
    </div>
  );
}
